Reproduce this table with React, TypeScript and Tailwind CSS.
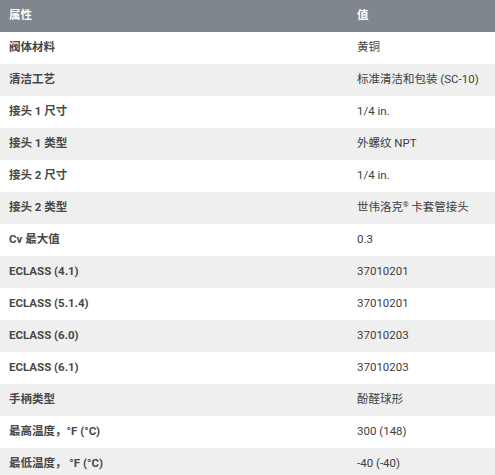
import React from "react";

const rows: [string, React.ReactNode][] = [
  ["阀体材料", "黄铜"],
  ["清洁工艺", "标准清洁和包装 (SC-10)"],
  ["接头 1 尺寸", "1/4 in."],
  ["接头 1 类型", "外螺纹 NPT"],
  ["接头 2 尺寸", "1/4 in."],
  [
    "接头 2 类型",
    <>
      世伟洛克<span className="relative top-[-4px] text-[7px]">®</span> 卡套管接头
    </>,
  ],
  ["Cv 最大值", "0.3"],
  ["ECLASS (4.1)", "37010201"],
  ["ECLASS (5.1.4)", "37010201"],
  ["ECLASS (6.0)", "37010203"],
  ["ECLASS (6.1)", "37010203"],
  ["手柄类型", "酚醛球形"],
  ["最高温度，°F (°C)", "300 (148)"],
  ["最低温度， °F (°C)", "-40 (-40)"],
];

export default function App() {
  return (
    <div
      className="w-[495px] h-[475px] overflow-hidden bg-white text-[11.5px]"
      style={{ fontFamily: 'Roboto, "Noto Sans CJK SC", sans-serif' }}
    >
      <div className="grid grid-cols-[357px_1fr] h-[32px] items-center bg-[#7f868c] text-white font-bold">
        <div className="pl-[9px]">属性</div>
        <div>值</div>
      </div>
      {rows.map(([k, v], i) => (
        <div
          key={i}
          className={
            "grid grid-cols-[357px_1fr] h-[32px] items-center " +
            (i % 2 === 0 ? "bg-white" : "bg-[#efefef]")
          }
        >
          <div className="pl-[9px] font-bold text-[#474747]">{k}</div>
          <div className="text-[#404040]">{v}</div>
        </div>
      ))}
    </div>
  );
}
